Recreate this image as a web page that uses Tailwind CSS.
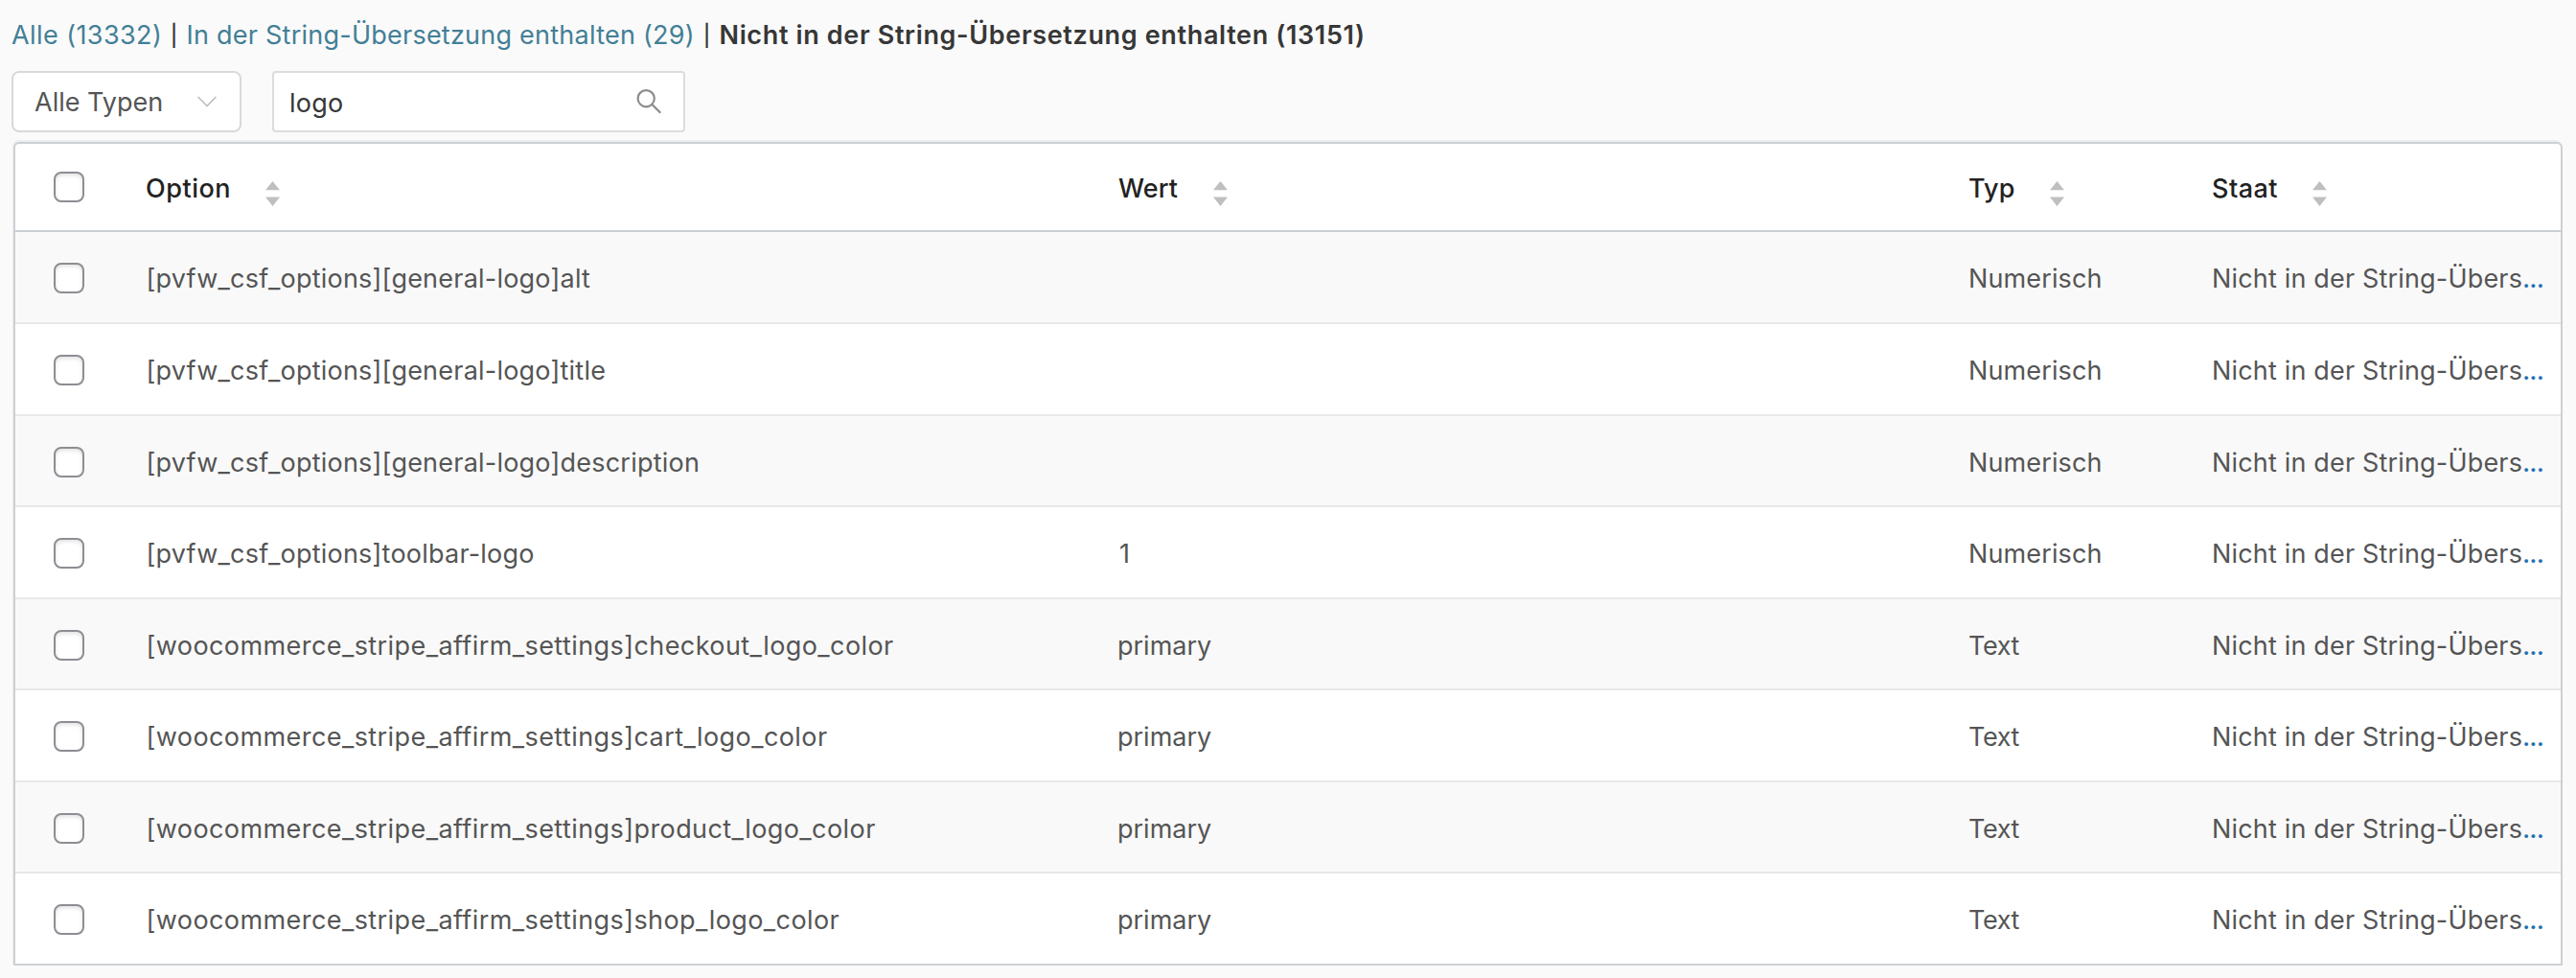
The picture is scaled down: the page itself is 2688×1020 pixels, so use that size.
<!DOCTYPE html>
<html lang="de">

<head>
    <meta charset="UTF-8">
    <meta name="viewport" content="width=device-width, initial-scale=1.0">
    <title>String-Übersetzung</title>
    <script src="https://cdn.jsdelivr.net/npm/@tailwindcss/browser@4"></script>
</head>

<body class="bg-[#fafafa] font-['Inter','Liberation_Sans',sans-serif] text-[27px] text-[#555]">
    <div class="flex h-[1020px] w-[2688px] flex-col overflow-hidden">

        <nav class="flex h-[74px] items-center pl-3 whitespace-nowrap text-[#373737]">
            <a class="w-[156.5px] text-[#437f96] tracking-[0.42px]">Alle (13332)</a>
            <span class="w-[26px] text-center text-[22px] font-medium">|</span>
            <a class="w-[530px] text-[#437f96] tracking-[0.24px]">In der String-Übersetzung enthalten (29)</a>
            <span class="w-[26px] text-center text-[22px] font-medium">|</span>
            <a class="font-semibold tracking-[0.64px]">Nicht in der String-Übersetzung enthalten (13151)</a>
        </nav>

        <div class="flex h-16 gap-8 pl-3">
            <div class="flex w-60 items-center justify-between rounded-lg border-2 border-[#d9d9d9] bg-white pr-6 pl-[22px]">
                <span class="pt-0.5">Alle Typen</span>
                <svg class="h-3 w-5" viewBox="0 0 20 12" fill="none" stroke="#bfbfbf" stroke-width="1.6">
                    <path d="M.6 1 10 10.5 19.4 1" />
                </svg>
            </div>
            <div class="flex w-[431px] items-center justify-between rounded border-2 border-[#dcdcdc] bg-white pr-[23px] pl-4">
                <span class="pt-1 text-[#373737] tracking-[0.24px]">logo</span>
                <svg class="h-[26px] w-[26px]" viewBox="0 0 26 26" fill="none" stroke="#8c8c8c" stroke-width="2.2">
                    <circle cx="10.2" cy="9.7" r="8.6" />
                    <path d="m16.2 15.7 9 9" />
                </svg>
            </div>
        </div>

        <div class="mt-2.5 ml-3.5 w-[2660px] overflow-hidden rounded-t-md border-2 border-[#ccd0d4] bg-white shadow-[-1px_-2px_0_0_#eeeeee]">
            <div class="grid h-[92px] grid-cols-[136px_1014px_888px_254px_1fr] border-b-2 border-[#ccd0d4] text-[#222] font-medium">
                <div class="pt-[29px] pl-10">
                    <div class="h-8 w-8 rounded-lg border-2 border-[#8e8d93] bg-white shadow-[inset_0_2px_4px_rgba(0,0,0,0.12)]"></div>
                </div>
                <div class="flex items-center pt-1">
                    <span class="w-[125px] tracking-[0.52px]">Option</span>
                    <svg class="mt-2.5 h-[26px] w-[15px]" viewBox="0 0 15 26" fill="#bfbfbf"><path d="M7.5 0 15 9.3H0ZM7.5 26 15 16.5H0Z" /></svg>
                </div>
                <div class="flex items-center pt-1">
                    <span class="w-[100px] pl-px tracking-[0.07px]">Wert</span>
                    <svg class="mt-2.5 h-[26px] w-[15px]" viewBox="0 0 15 26" fill="#bfbfbf"><path d="M7.5 0 15 9.3H0ZM7.5 26 15 16.5H0Z" /></svg>
                </div>
                <div class="flex items-center pt-1">
                    <span class="w-[85px] tracking-[0.12px]">Typ</span>
                    <svg class="mt-2.5 h-[26px] w-[15px]" viewBox="0 0 15 26" fill="#bfbfbf"><path d="M7.5 0 15 9.3H0ZM7.5 26 15 16.5H0Z" /></svg>
                </div>
                <div class="flex items-center pt-1">
                    <span class="w-[105px] tracking-[0.47px]">Staat</span>
                    <svg class="mt-2.5 h-[26px] w-[15px]" viewBox="0 0 15 26" fill="#bfbfbf"><path d="M7.5 0 15 9.3H0ZM7.5 26 15 16.5H0Z" /></svg>
                </div>
            </div>
            <div id="rows"></div>
        </div>
    </div>

    <script>
        const options = [
            { name: "[pvfw_csf_options][general-logo]alt", value: "", type: "Numerisch" },
            { name: "[pvfw_csf_options][general-logo]title", value: "", type: "Numerisch" },
            { name: "[pvfw_csf_options][general-logo]description", value: "", type: "Numerisch" },
            { name: "[pvfw_csf_options]toolbar-logo", value: "1", type: "Numerisch" },
            { name: "[woocommerce_stripe_affirm_settings]checkout_logo_color", value: "primary", type: "Text" },
            { name: "[woocommerce_stripe_affirm_settings]cart_logo_color", value: "primary", type: "Text" },
            { name: "[woocommerce_stripe_affirm_settings]product_logo_color", value: "primary", type: "Text" },
            { name: "[woocommerce_stripe_affirm_settings]shop_logo_color", value: "primary", type: "Text" }
        ]

        const renderRows = () => {
            const rows = document.getElementById("rows")
            options.forEach((option, i) => {
                const row = document.createElement("div")
                // row pitch is 95.5px, so the heights alternate
                const height = i === 0 || i % 2 === 1 ? "h-24" : "h-[95px]"
                const line = i === options.length - 1 ? "h-[94px]" : height + " border-b-2 border-[#e8e8e8]"
                const nameTracking = option.name.startsWith("[woo") ? "tracking-[0.42px]" : "tracking-[0.22px]"
                const typeTracking = option.type === "Text" ? "tracking-[-0.41px]" : "tracking-[0.12px]"
                const valuePadding = option.value === "1" ? "pl-0.5" : "pl-0"
                row.className = "grid grid-cols-[136px_1014px_888px_254px_1fr] leading-[98px] whitespace-nowrap " + line + (i % 2 === 0 ? " bg-[#f9f9f9]" : "")
                row.innerHTML = `
                <div class="pt-8 pl-10">
                    <div class="h-8 w-8 rounded-lg border-2 border-[#8e8d93] bg-white shadow-[inset_0_2px_4px_rgba(0,0,0,0.12)]"></div>
                </div>
                <div class="h-0 pl-[0.5px] ${nameTracking}">${option.name}</div>
                <div class="h-0 ${valuePadding}">${option.value}</div>
                <div class="h-0 ${typeTracking}">${option.type}</div>
                <div class="h-0 tracking-[0.17px]">Nicht in der String-Übers<span class="font-medium text-[#2271b1] tracking-[-0.9px]">...</span></div>
                `
                rows.appendChild(row)
            })
        }

        renderRows()
    </script>
</body>

</html>
